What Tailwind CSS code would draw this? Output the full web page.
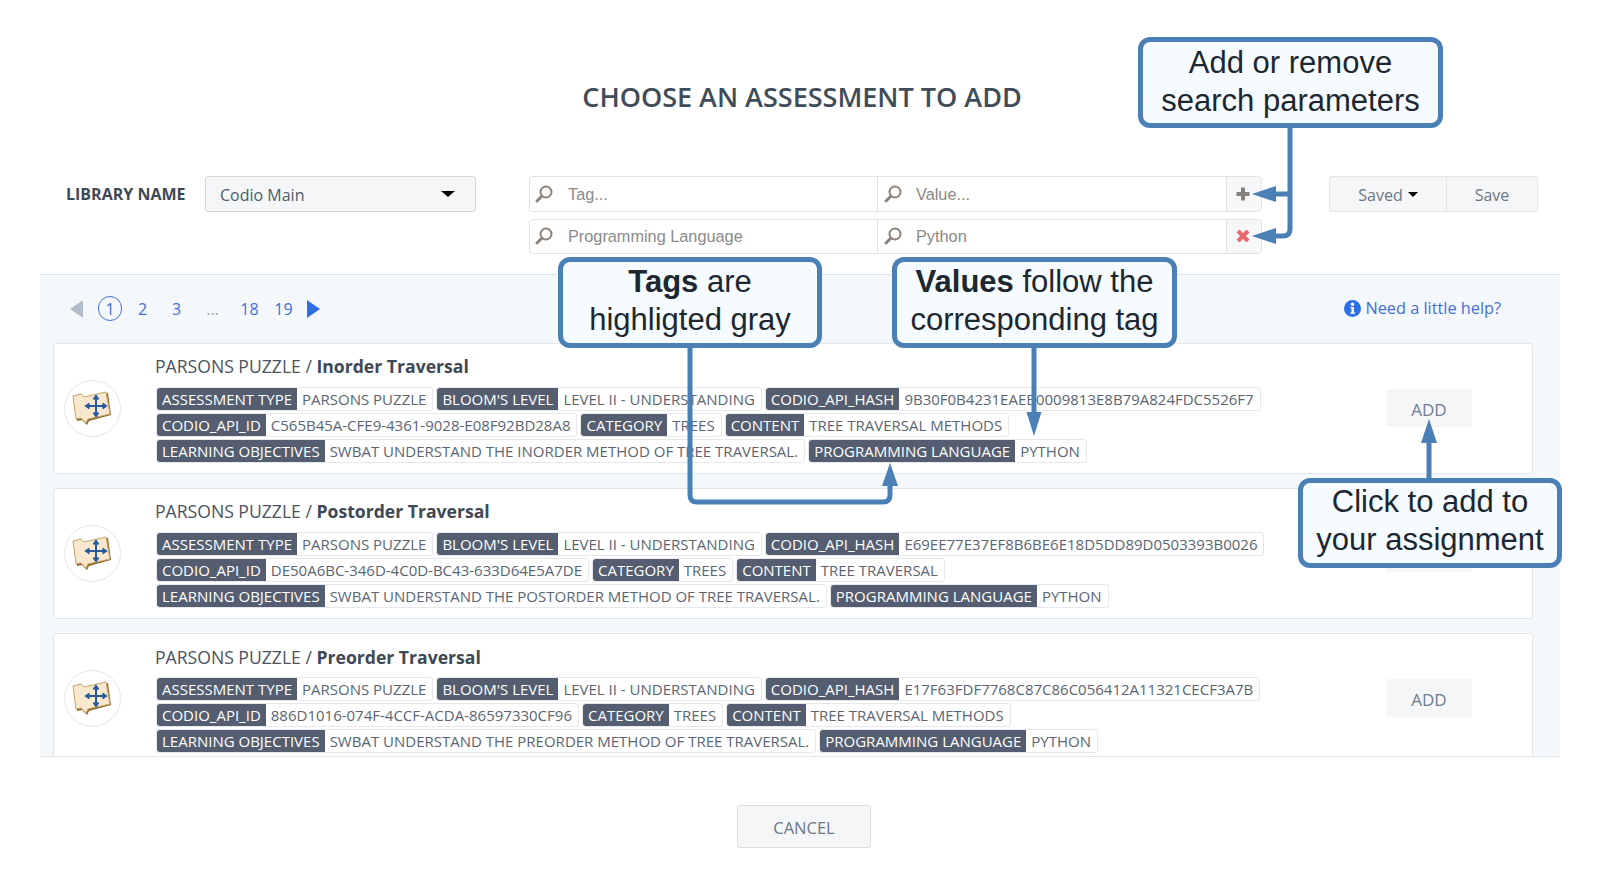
<!DOCTYPE html>
<html><head><meta charset="utf-8"><title>Choose an assessment</title>
<script src="https://cdn.jsdelivr.net/npm/@tailwindcss/browser@4"></script></head>
<body class="bg-white">
<div class="relative w-[1600px] h-[892px] overflow-hidden bg-white font-['Open_Sans',sans-serif] text-[#5a6573]">
  <div class="h-[176px] pt-[78px] pl-[4px] text-center text-[27px] leading-[38px] font-semibold text-[#3f4d5a]">CHOOSE AN ASSESSMENT TO ADD</div>

  <div class="flex items-start h-[98px] pl-[66px]">
    <div class="w-[139px] h-[36px] flex items-center text-[16px] font-bold text-[#3f4855]">LIBRARY NAME</div>
    <div class="w-[271px] h-[36px] flex items-center justify-between pl-[14px] pr-[20px] bg-[#f5f6f8] border border-[#d6d6d6] rounded-[3px] text-[16px] text-[#4f5b6b]">
      <span class="pt-[2px]">Codio Main</span><span class="w-0 h-0 border-x-[7px] border-x-transparent border-t-[6px] border-t-black"></span>
    </div>
    <div class="w-[733px] ml-[53px] flex flex-col gap-[7px] font-['Liberation_Sans',sans-serif] text-[16.3px] text-[#8a8a8a]">
      <div class="flex h-[36px] border border-[#e2e2e2] rounded-[4px]">
        <div class="w-[348px] flex items-center gap-[14px] pl-[4px] border-r border-[#e2e2e2]"><svg width="20" height="20" viewBox="0 0 20 20" fill="none" class="mb-[1px]"><circle cx="12" cy="8" r="5.5" stroke="#8c8279" stroke-width="2"/><path d="M7.5 12.500L3 17" stroke="#8c8279" stroke-width="3" stroke-linecap="round"/></svg><span class="pt-[1px]">Tag...</span></div>
        <div class="flex-1 flex items-center gap-[13px] pl-[5px]"><svg width="20" height="20" viewBox="0 0 20 20" fill="none" class="mb-[1px]"><circle cx="12" cy="8" r="5.5" stroke="#8c8279" stroke-width="2"/><path d="M7.5 12.500L3 17" stroke="#8c8279" stroke-width="3" stroke-linecap="round"/></svg><span class="pt-[1px]">Value...</span></div>
        <div class="w-[35px] flex items-center justify-center bg-[#f6f7f8] border-l border-[#e2e2e2] rounded-r-[4px]"><svg width="16" height="16" viewBox="0 0 16 16" class="mr-[2px]"><path d="M8 1.500v13M1.500 8h13" stroke="#85817c" stroke-width="4"/></svg></div>
      </div>
      <div class="flex h-[35px] border border-[#e2e2e2] rounded-[4px]">
        <div class="w-[348px] flex items-center gap-[14px] pl-[4px] pb-[1px] border-r border-[#e2e2e2]"><svg width="20" height="20" viewBox="0 0 20 20" fill="none"><circle cx="12" cy="8" r="5.5" stroke="#8c8279" stroke-width="2"/><path d="M7.5 12.500L3 17" stroke="#8c8279" stroke-width="3" stroke-linecap="round"/></svg><span>Programming Language</span></div>
        <div class="flex-1 flex items-center gap-[13px] pl-[5px] pb-[1px]"><svg width="20" height="20" viewBox="0 0 20 20" fill="none"><circle cx="12" cy="8" r="5.5" stroke="#8c8279" stroke-width="2"/><path d="M7.5 12.500L3 17" stroke="#8c8279" stroke-width="3" stroke-linecap="round"/></svg><span>Python</span></div>
        <div class="w-[35px] flex items-center justify-center bg-[#f6f7f8] border-l border-[#e2e2e2] rounded-r-[4px]"><svg width="14" height="14" viewBox="0 0 14 14" class="mr-[2px] mb-[1px]"><path d="M2 2l10 10M12 2L2 12" stroke="#e8696b" stroke-width="4"/></svg></div>
      </div>
    </div>
    <div class="ml-[67px] flex h-[36px] w-[209px] text-[16px] text-[#6b7686]">
      <div class="w-[118px] flex items-center justify-center gap-[5px] bg-[#f5f6f8] border border-[#e2e4e7] rounded-l-[3px]"><span class="pt-[2px]">Saved</span><span class="w-0 h-0 border-x-[5px] border-x-transparent border-t-[5px] border-t-black"></span></div>
      <div class="flex-1 flex items-center justify-center pt-[2px] bg-[#f5f6f8] border border-l-0 border-[#e2e4e7] rounded-r-[3px]">Save</div>
    </div>
  </div>

  <div class="mx-[40px] h-[483px] overflow-hidden bg-[#f5f8fb] border-y border-[#e3e6e9]">
    <div class="relative flex items-center h-[68px] pl-[30px] pr-[59px] pb-[1px] text-[16px] text-[#3f6fd8]">
      <span class="w-0 h-0 border-y-[9px] border-y-transparent border-r-[13px] border-r-[#b3bccb]"></span>
      <span class="ml-[15px] w-[24px] h-[25px] flex items-center justify-center border border-[#3f6fd8] rounded-full">1</span>
      <span class="w-[41px] text-center">2</span>
      <span class="w-[27px] text-center">3</span>
      <span class="w-[45px] text-center text-[#9aa3b2]">...</span>
      <span class="w-[29px] text-center">18</span>
      <span class="w-[39px] text-center">19</span>
      <span class="ml-[4px] w-0 h-0 border-y-[9px] border-y-transparent border-l-[13px] border-l-[#2f6fe4]"></span>
      <span class="ml-auto flex items-center gap-[4px]"><svg width="17" height="17" viewBox="0 0 17 17"><circle cx="8.500" cy="8.500" r="8.500" fill="#2f6fe4"/><circle cx="8.500" cy="4.200" r="1.700" fill="#fff"/><path d="M6.500 7h3.400v5.500h1.200v1.300H6.300v-1.300h1.200V8.300h-1z" fill="#fff"/></svg><span class="text-[16.3px]">Need a little help?</span></span>
    </div>

    <div class="flex flex-col gap-[14px] pl-[13px] pr-[27px]">
      <!-- card 1 -->
      <div class="flex h-[131px] shrink-0 bg-white border border-[#e3e6e9] rounded-[3px]">
        <div class="w-[101px] shrink-0 pl-[10px] pt-[36px]">
          <div class="w-[57px] h-[57px]"><svg width="57" height="57" viewBox="4 10 57 57"><circle cx="32.500" cy="38.500" r="28" fill="#fff" stroke="#e6e6e6"/><path d="M14 27l8-2 3 3 23-5 3 22-22 6-2 4-5-5-5 1z" fill="#8a6a2f"/><path d="M13 26l8-2 3 3 22-5 4 22-22 5-2 4-5-5-5 1z" fill="#f9e8cd" stroke="#c7a468"/><path d="M36 27v18M27 36h18M33.500 29.500L36 26l2.500 3.500M33.500 42.500L36 46l2.500-3.500M29.500 33.500L26 36l3.500 2.500M42.500 33.500L46 36l-3.500 2.500" stroke="#2a5a9a" stroke-width="2" fill="none"/></svg></div>
        </div>
        <div class="flex-1 min-w-0">
          <div class="h-[43px] pt-[9px] text-[17.6px] leading-[26px] text-[#4a5361]">PARSONS PUZZLE / <b class="text-[#3f4855]">Inorder Traversal</b></div>
          <div class="flex flex-col gap-[2px] ml-[1px] text-[15px] leading-[22px]">
            <div class="flex gap-[3px]">
              <div class="flex h-[24px] border border-[#e6e8eb] rounded-[3px] bg-white"><span class="px-[5px] bg-[#545e70] text-white rounded-l-[3px]">ASSESSMENT TYPE</span><span class="pl-[5px] pr-[6px]">PARSONS PUZZLE</span></div>
              <div class="flex h-[24px] border border-[#e6e8eb] rounded-[3px] bg-white"><span class="px-[5px] bg-[#545e70] text-white rounded-l-[3px]">BLOOM'S LEVEL</span><span class="pl-[5px] pr-[6px]">LEVEL II - UNDERSTANDING</span></div>
              <div class="flex h-[24px] border border-[#e6e8eb] rounded-[3px] bg-white"><span class="px-[5px] bg-[#545e70] text-white rounded-l-[3px]">CODIO_API_HASH</span><span class="pl-[5px] pr-[6px]">9B30F0B4231EAEB0009813E8B79A824FDC5526F7</span></div>
            </div>
            <div class="flex gap-[3px]">
              <div class="flex h-[24px] border border-[#e6e8eb] rounded-[3px] bg-white"><span class="px-[5px] bg-[#545e70] text-white rounded-l-[3px]">CODIO_API_ID</span><span class="pl-[5px] pr-[6px]">C565B45A-CFE9-4361-9028-E08F92BD28A8</span></div>
              <div class="flex h-[24px] border border-[#e6e8eb] rounded-[3px] bg-white"><span class="px-[5px] bg-[#545e70] text-white rounded-l-[3px]">CATEGORY</span><span class="pl-[5px] pr-[6px]">TREES</span></div>
              <div class="flex h-[24px] border border-[#e6e8eb] rounded-[3px] bg-white"><span class="px-[5px] bg-[#545e70] text-white rounded-l-[3px]">CONTENT</span><span class="pl-[5px] pr-[6px]">TREE TRAVERSAL METHODS</span></div>
            </div>
            <div class="flex gap-[3px]">
              <div class="flex h-[24px] border border-[#e6e8eb] rounded-[3px] bg-white"><span class="px-[5px] bg-[#545e70] text-white rounded-l-[3px]">LEARNING OBJECTIVES</span><span class="pl-[5px] pr-[6px]">SWBAT UNDERSTAND THE INORDER METHOD OF TREE TRAVERSAL.</span></div>
              <div class="flex h-[24px] border border-[#e6e8eb] rounded-[3px] bg-white"><span class="px-[5px] bg-[#545e70] text-white rounded-l-[3px]">PROGRAMMING LANGUAGE</span><span class="pl-[5px] pr-[6px]">PYTHON</span></div>
            </div>
          </div>
        </div>
        <div class="shrink-0 mr-[60px] mt-[45px] w-[86px] h-[38px] pt-[4px] flex items-center justify-center bg-[#f5f6f8] rounded-[3px] text-[17px] text-[#6f7c91]">ADD</div>
      </div>
      <!-- card 2 -->
      <div class="flex h-[131px] shrink-0 bg-white border border-[#e3e6e9] rounded-[3px]">
        <div class="w-[101px] shrink-0 pl-[10px] pt-[36px]">
          <div class="w-[57px] h-[57px]"><svg width="57" height="57" viewBox="4 10 57 57"><circle cx="32.500" cy="38.500" r="28" fill="#fff" stroke="#e6e6e6"/><path d="M14 27l8-2 3 3 23-5 3 22-22 6-2 4-5-5-5 1z" fill="#8a6a2f"/><path d="M13 26l8-2 3 3 22-5 4 22-22 5-2 4-5-5-5 1z" fill="#f9e8cd" stroke="#c7a468"/><path d="M36 27v18M27 36h18M33.500 29.500L36 26l2.500 3.500M33.500 42.500L36 46l2.500-3.500M29.500 33.500L26 36l3.500 2.500M42.500 33.500L46 36l-3.500 2.500" stroke="#2a5a9a" stroke-width="2" fill="none"/></svg></div>
        </div>
        <div class="flex-1 min-w-0">
          <div class="h-[43px] pt-[9px] text-[17.6px] leading-[26px] text-[#4a5361]">PARSONS PUZZLE / <b class="text-[#3f4855]">Postorder Traversal</b></div>
          <div class="flex flex-col gap-[2px] ml-[1px] text-[15px] leading-[22px]">
            <div class="flex gap-[3px]">
              <div class="flex h-[24px] border border-[#e6e8eb] rounded-[3px] bg-white"><span class="px-[5px] bg-[#545e70] text-white rounded-l-[3px]">ASSESSMENT TYPE</span><span class="pl-[5px] pr-[6px]">PARSONS PUZZLE</span></div>
              <div class="flex h-[24px] border border-[#e6e8eb] rounded-[3px] bg-white"><span class="px-[5px] bg-[#545e70] text-white rounded-l-[3px]">BLOOM'S LEVEL</span><span class="pl-[5px] pr-[6px]">LEVEL II - UNDERSTANDING</span></div>
              <div class="flex h-[24px] border border-[#e6e8eb] rounded-[3px] bg-white"><span class="px-[5px] bg-[#545e70] text-white rounded-l-[3px]">CODIO_API_HASH</span><span class="pl-[5px] pr-[6px]">E69EE77E37EF8B6BE6E18D5DD89D0503393B0026</span></div>
            </div>
            <div class="flex gap-[3px]">
              <div class="flex h-[24px] border border-[#e6e8eb] rounded-[3px] bg-white"><span class="px-[5px] bg-[#545e70] text-white rounded-l-[3px]">CODIO_API_ID</span><span class="pl-[5px] pr-[6px]">DE50A6BC-346D-4C0D-BC43-633D64E5A7DE</span></div>
              <div class="flex h-[24px] border border-[#e6e8eb] rounded-[3px] bg-white"><span class="px-[5px] bg-[#545e70] text-white rounded-l-[3px]">CATEGORY</span><span class="pl-[5px] pr-[6px]">TREES</span></div>
              <div class="flex h-[24px] border border-[#e6e8eb] rounded-[3px] bg-white"><span class="px-[5px] bg-[#545e70] text-white rounded-l-[3px]">CONTENT</span><span class="pl-[5px] pr-[6px]">TREE TRAVERSAL</span></div>
            </div>
            <div class="flex gap-[3px]">
              <div class="flex h-[24px] border border-[#e6e8eb] rounded-[3px] bg-white"><span class="px-[5px] bg-[#545e70] text-white rounded-l-[3px]">LEARNING OBJECTIVES</span><span class="pl-[5px] pr-[6px]">SWBAT UNDERSTAND THE POSTORDER METHOD OF TREE TRAVERSAL.</span></div>
              <div class="flex h-[24px] border border-[#e6e8eb] rounded-[3px] bg-white"><span class="px-[5px] bg-[#545e70] text-white rounded-l-[3px]">PROGRAMMING LANGUAGE</span><span class="pl-[5px] pr-[6px]">PYTHON</span></div>
            </div>
          </div>
        </div>
        <div class="shrink-0 mr-[60px] mt-[45px] w-[86px] h-[38px] pt-[4px] flex items-center justify-center bg-[#f5f6f8] rounded-[3px] text-[17px] text-[#6f7c91]">ADD</div>
      </div>
      <!-- card 3 -->
      <div class="flex h-[131px] shrink-0 bg-white border border-[#e3e6e9] rounded-[3px]">
        <div class="w-[101px] shrink-0 pl-[10px] pt-[36px]">
          <div class="w-[57px] h-[57px]"><svg width="57" height="57" viewBox="4 10 57 57"><circle cx="32.500" cy="38.500" r="28" fill="#fff" stroke="#e6e6e6"/><path d="M14 27l8-2 3 3 23-5 3 22-22 6-2 4-5-5-5 1z" fill="#8a6a2f"/><path d="M13 26l8-2 3 3 22-5 4 22-22 5-2 4-5-5-5 1z" fill="#f9e8cd" stroke="#c7a468"/><path d="M36 27v18M27 36h18M33.500 29.500L36 26l2.500 3.500M33.500 42.500L36 46l2.500-3.500M29.500 33.500L26 36l3.500 2.500M42.500 33.500L46 36l-3.500 2.500" stroke="#2a5a9a" stroke-width="2" fill="none"/></svg></div>
        </div>
        <div class="flex-1 min-w-0">
          <div class="h-[43px] pt-[10px] text-[17.6px] leading-[26px] text-[#4a5361]">PARSONS PUZZLE / <b class="text-[#3f4855]">Preorder Traversal</b></div>
          <div class="flex flex-col gap-[2px] ml-[1px] text-[15px] leading-[22px]">
            <div class="flex gap-[3px]">
              <div class="flex h-[24px] border border-[#e6e8eb] rounded-[3px] bg-white"><span class="px-[5px] bg-[#545e70] text-white rounded-l-[3px]">ASSESSMENT TYPE</span><span class="pl-[5px] pr-[6px]">PARSONS PUZZLE</span></div>
              <div class="flex h-[24px] border border-[#e6e8eb] rounded-[3px] bg-white"><span class="px-[5px] bg-[#545e70] text-white rounded-l-[3px]">BLOOM'S LEVEL</span><span class="pl-[5px] pr-[6px]">LEVEL II - UNDERSTANDING</span></div>
              <div class="flex h-[24px] border border-[#e6e8eb] rounded-[3px] bg-white"><span class="px-[5px] bg-[#545e70] text-white rounded-l-[3px]">CODIO_API_HASH</span><span class="pl-[5px] pr-[6px]">E17F63FDF7768C87C86C056412A11321CECF3A7B</span></div>
            </div>
            <div class="flex gap-[3px]">
              <div class="flex h-[24px] border border-[#e6e8eb] rounded-[3px] bg-white"><span class="px-[5px] bg-[#545e70] text-white rounded-l-[3px]">CODIO_API_ID</span><span class="pl-[5px] pr-[6px]">886D1016-074F-4CCF-ACDA-86597330CF96</span></div>
              <div class="flex h-[24px] border border-[#e6e8eb] rounded-[3px] bg-white"><span class="px-[5px] bg-[#545e70] text-white rounded-l-[3px]">CATEGORY</span><span class="pl-[5px] pr-[6px]">TREES</span></div>
              <div class="flex h-[24px] border border-[#e6e8eb] rounded-[3px] bg-white"><span class="px-[5px] bg-[#545e70] text-white rounded-l-[3px]">CONTENT</span><span class="pl-[5px] pr-[6px]">TREE TRAVERSAL METHODS</span></div>
            </div>
            <div class="flex gap-[3px]">
              <div class="flex h-[24px] border border-[#e6e8eb] rounded-[3px] bg-white"><span class="px-[5px] bg-[#545e70] text-white rounded-l-[3px]">LEARNING OBJECTIVES</span><span class="pl-[5px] pr-[6px]">SWBAT UNDERSTAND THE PREORDER METHOD OF TREE TRAVERSAL.</span></div>
              <div class="flex h-[24px] border border-[#e6e8eb] rounded-[3px] bg-white"><span class="px-[5px] bg-[#545e70] text-white rounded-l-[3px]">PROGRAMMING LANGUAGE</span><span class="pl-[5px] pr-[6px]">PYTHON</span></div>
            </div>
          </div>
        </div>
        <div class="shrink-0 mr-[60px] mt-[45px] w-[86px] h-[38px] pt-[4px] flex items-center justify-center bg-[#f5f6f8] rounded-[3px] text-[17px] text-[#6f7c91]">ADD</div>
      </div>
    </div>
  </div>

  <div class="flex justify-center pt-[48px] pl-[8px]">
    <div class="w-[134px] h-[43px] pt-[3px] flex items-center justify-center bg-[#f5f6f8] border border-[#dcdee1] rounded-[3px] text-[16.5px] text-[#6b7686]">CANCEL</div>
  </div>

  <!-- annotation connectors -->
  <svg class="absolute left-0 top-0 pointer-events-none" width="1600" height="892" fill="none">
    <g stroke="#4a80b5" stroke-width="5">
      <path d="M1290 125V229q0 7-7 7H1272"/>
      <path d="M1290 194H1272"/>
      <path d="M690 345V495q0 7 7 7H883q7 0 7-7V483"/>
      <path d="M1034 345V416"/>
      <path d="M1429 480V440"/>
    </g>
    <g fill="#4a80b5">
      <path d="M1252 194l24-8v16z"/>
      <path d="M1252 236l24-8v16z"/>
      <path d="M890 463l8 23h-16z"/>
      <path d="M1034 436l-7.500-24h15z"/>
      <path d="M1429 419l8 24h-16z"/>
    </g>
  </svg>

  <!-- annotation callouts -->
  <div class="absolute left-[1138px] top-[37px] w-[305px] h-[91px] pb-[2px] flex items-center justify-center text-center bg-[#f6fbff] border-[5px] border-[#4a80b5] rounded-[12px] font-['Liberation_Sans',sans-serif] text-[31px] leading-[38px] text-[#1c2730]">Add or remove<br>search parameters</div>
  <div class="absolute left-[558px] top-[257px] w-[264px] h-[91px] pb-[3px] flex items-center justify-center text-center bg-[#f6fbff] border-[5px] border-[#4a80b5] rounded-[12px] font-['Liberation_Sans',sans-serif] text-[31px] leading-[38px] text-[#1c2730]"><span><b>Tags</b> are<br>highligted gray</span></div>
  <div class="absolute left-[892px] top-[257px] w-[285px] h-[91px] pb-[3px] flex items-center justify-center text-center bg-[#f6fbff] border-[5px] border-[#4a80b5] rounded-[12px] font-['Liberation_Sans',sans-serif] text-[31px] leading-[38px] text-[#1c2730]"><span><b>Values</b> follow the<br>corresponding tag</span></div>
  <div class="absolute left-[1298px] top-[478px] w-[264px] h-[90px] pb-[4px] flex items-center justify-center text-center bg-[#f6fbff] border-[5px] border-[#4a80b5] rounded-[12px] font-['Liberation_Sans',sans-serif] text-[31px] leading-[38px] text-[#1c2730]">Click to add to<br>your assignment</div>
</div>
</body></html>
